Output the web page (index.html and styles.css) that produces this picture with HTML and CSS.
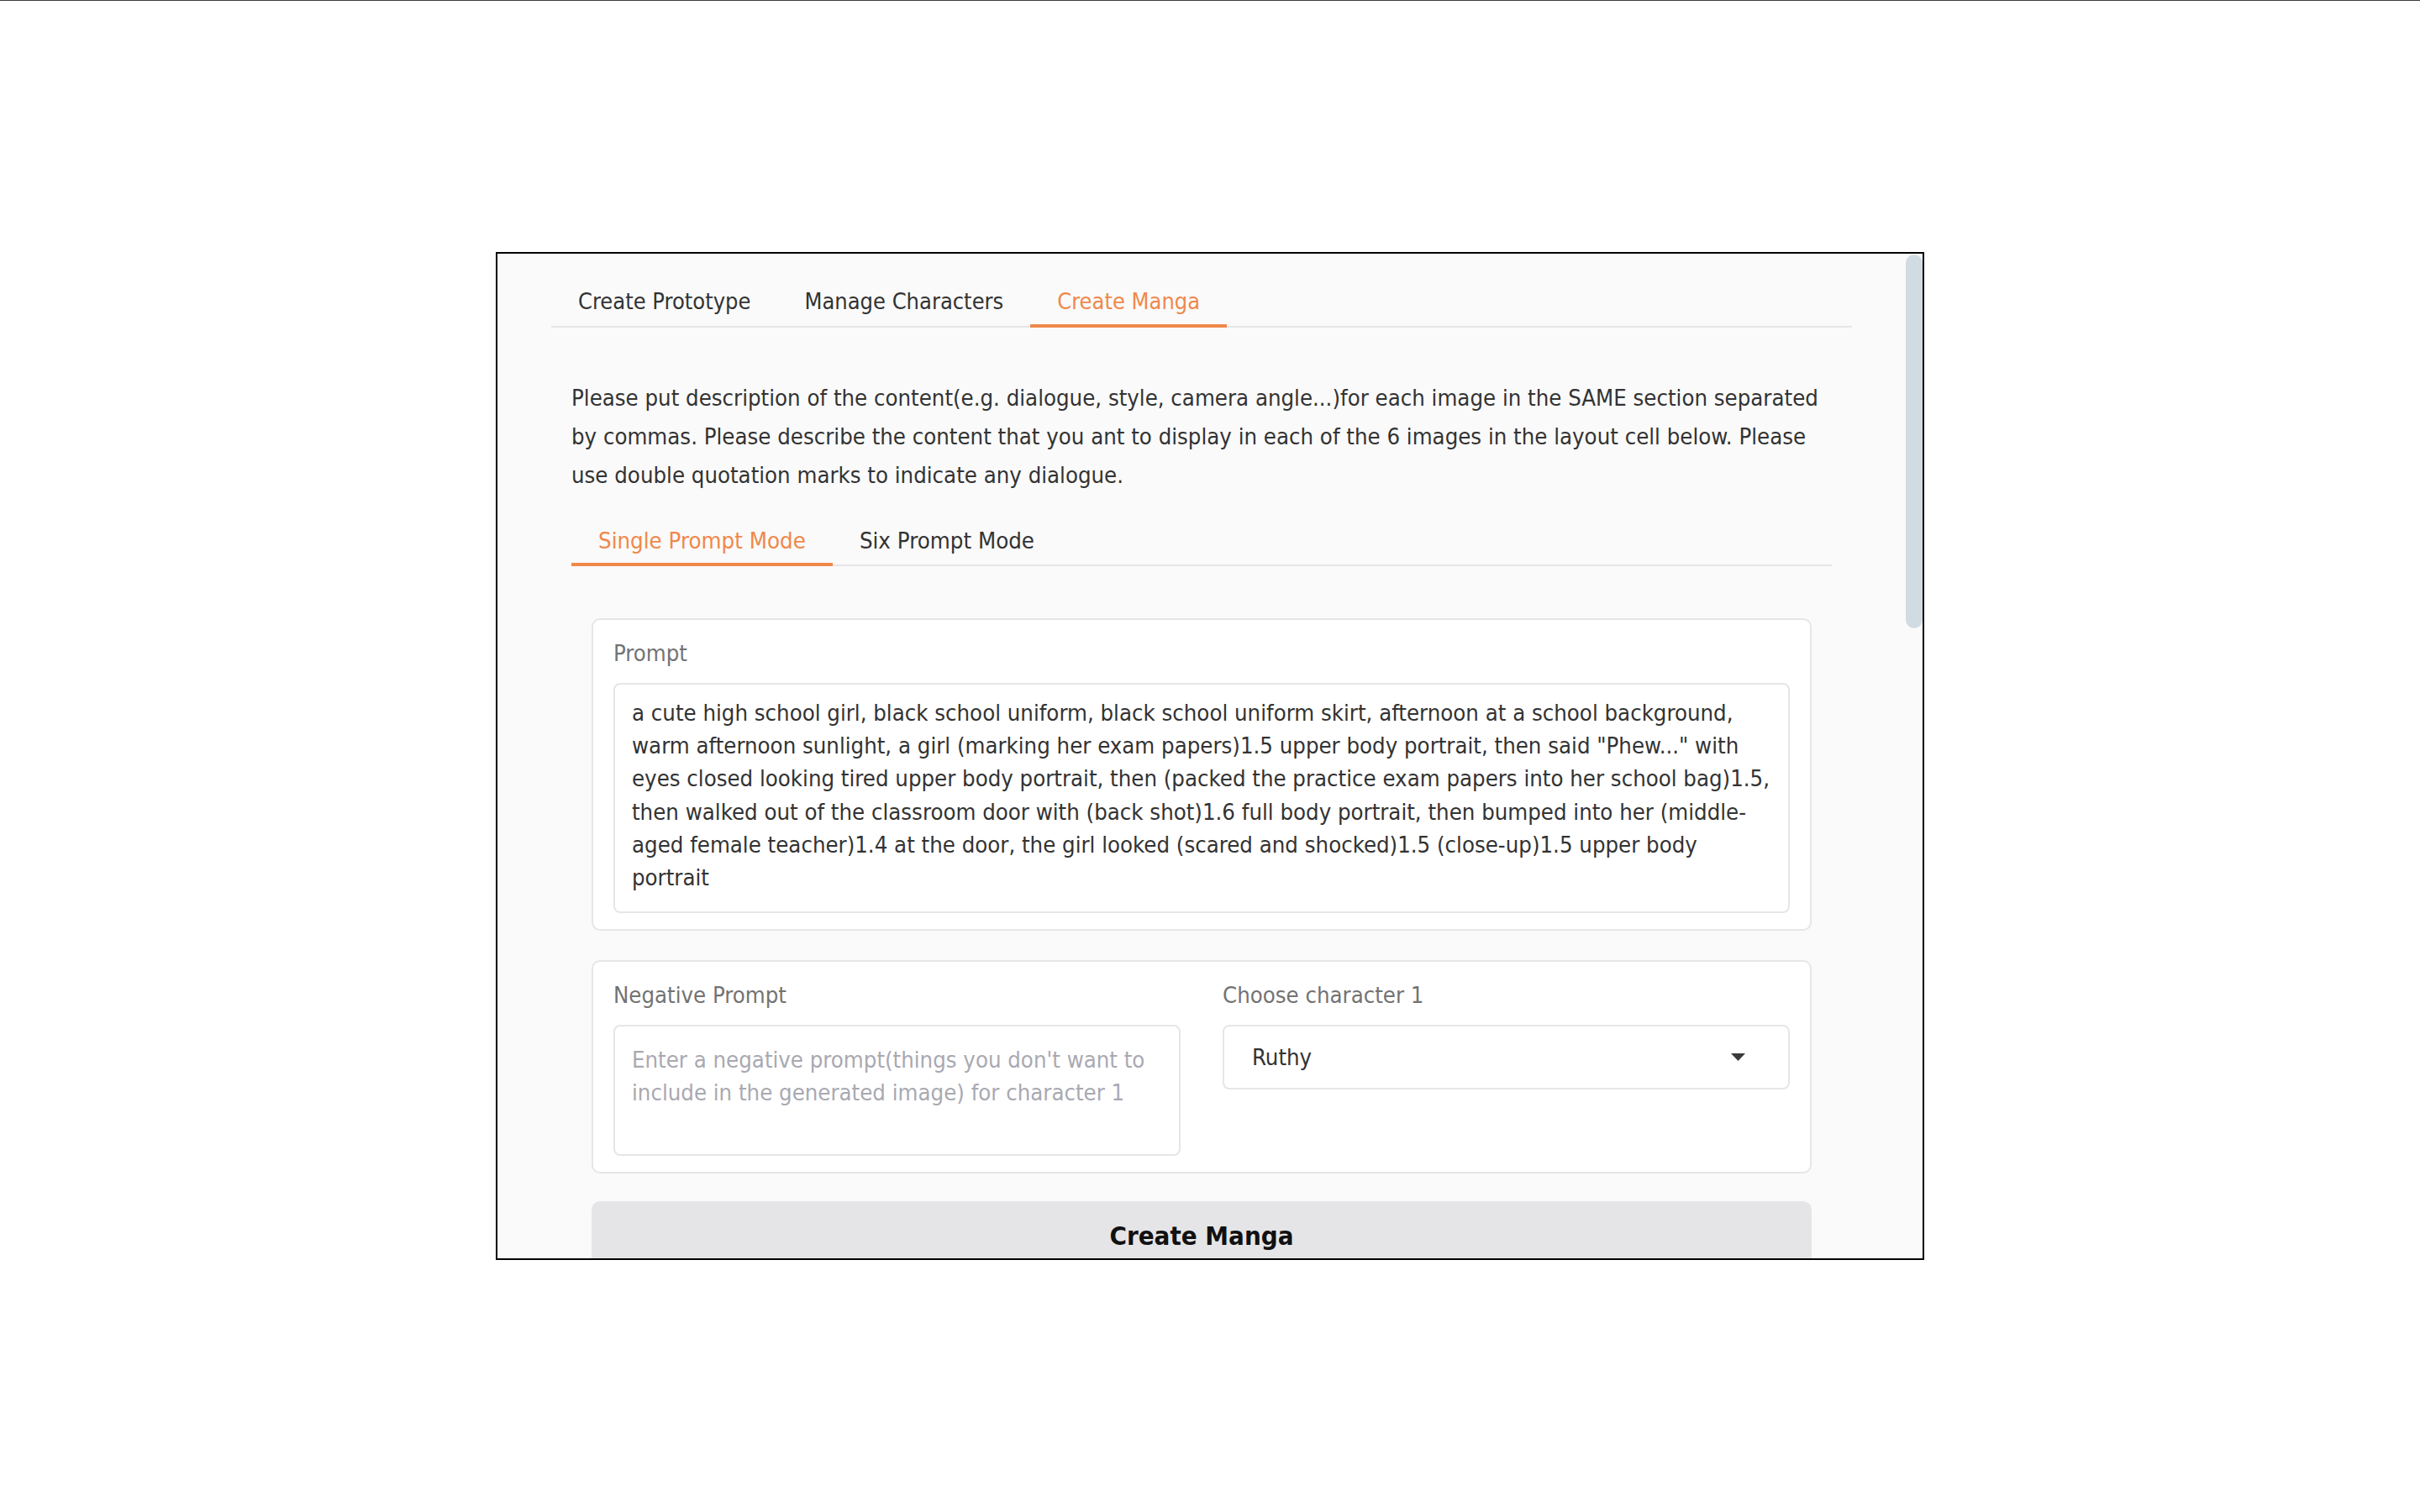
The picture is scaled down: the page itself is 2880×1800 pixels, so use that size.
FILE: index.html
```html
<!DOCTYPE html>
<html>
<head>
<meta charset="utf-8">
<title>Create Manga</title>
<link rel="stylesheet" href="styles.css">
</head>
<body>
<div class="topline"></div>
<div class="window">
  <div class="content">
    <div class="tab-nav">
      <button class="tab">Create Prototype</button>
      <button class="tab">Manage Characters</button>
      <button class="tab active">Create Manga</button>
    </div>
    <div class="tab-panel">
      <p class="desc">Please put description of the content(e.g. dialogue, style, camera angle...)for each image in the SAME section separated<br>by commas. Please describe the content that you ant to display in each of the 6 images in the layout cell below. Please<br>use double quotation marks to indicate any dialogue.</p>
      <div class="tab-nav sub-nav">
        <button class="tab sub active">Single Prompt Mode</button>
        <button class="tab sub">Six Prompt Mode</button>
      </div>
      <div class="sub-panel">
        <div class="block">
          <span class="label">Prompt</span>
          <div class="textbox prompt-text">a cute high school girl, black school uniform, black school uniform skirt, afternoon at a school background,<br>warm afternoon sunlight, a girl (marking her exam papers)1.5 upper body portrait, then said "Phew..." with<br>eyes closed looking tired upper body portrait, then (packed the practice exam papers into her school bag)1.5,<br>then walked out of the classroom door with (back shot)1.6 full body portrait, then bumped into her (middle-<br>aged female teacher)1.4 at the door, the girl looked (scared and shocked)1.5 (close-up)1.5 upper body<br>portrait</div>
        </div>
        <div class="block block-row">
          <div class="col">
            <span class="label">Negative Prompt</span>
            <div class="textbox neg-text">Enter a negative prompt(things you don't want to<br>include in the generated image) for character 1</div>
          </div>
          <div class="col">
            <span class="label">Choose character 1</span>
            <div class="dropdown">
              <span class="dd-value">Ruthy</span>
              <svg class="dd-arrow" width="17" height="9" viewBox="0 0 17 9"><path d="M0 0H17L8.5 9Z" fill="#3a3a3a"/></svg>
            </div>
          </div>
        </div>
        <button class="create-btn">Create Manga</button>
      </div>
    </div>
  </div>
  <div class="scrollbar"><div class="thumb"></div></div>
</div>
</body>
</html>
```

FILE: styles.css
```css
* { box-sizing: border-box; }
body {
  margin: 0;
  background: #ffffff;
  font-family: "DejaVu Sans Condensed", "DejaVu Sans", sans-serif;
  color: #333333;
}
.topline { height: 1px; background: #3c3c3c; }
.window {
  margin: 299px 0 0 590px;
  width: 1700px;
  height: 1200px;
  border: 2px solid #000;
  background: #fafafa;
  display: flex;
  overflow: hidden;
}
.content { flex: 1; min-width: 0; padding: 29px 64px 0; }
.scrollbar { width: 20px; flex: none; padding-top: 1px; }
.thumb { height: 445px; border-radius: 10px; background: #d1dbe2; }

.tab-nav { display: flex; border-bottom: 2px solid #e6e6e6; }
.tab {
  font-family: inherit;
  font-size: 27px;
  line-height: 55px;
  height: 59px;
  padding: 0 32px;
  background: none;
  border: 0;
  border-bottom: 4px solid transparent;
  margin-bottom: -2px;
  color: #333333;
  white-space: nowrap;
}
.tab.sub { font-size: 27.4px; line-height: 53px; height: 57px; }
.tab.active { color: #f0884a; border-bottom-color: #f0884a; }

.tab-panel { padding: 0 24px; }
.desc {
  margin: 61px 0 28px;
  font-size: 27.3px;
  line-height: 46px;
  white-space: nowrap;
}
.sub-panel { padding: 62px 24px 0; }

.block {
  background: #fff;
  border: 2px solid #e6e6e6;
  border-radius: 10px;
  padding: 22px 24px 19px;
}
.label {
  display: block;
  font-size: 27.3px;
  line-height: 36px;
  color: #737373;
  margin-bottom: 17px;
  white-space: nowrap;
}
.textbox {
  background: #fff;
  border: 2px solid #e6e6e6;
  border-radius: 8px;
  font-size: 27.3px;
  line-height: 39.2px;
  white-space: nowrap;
  overflow: hidden;
}
.prompt-text { padding: 14px 20px 21px; color: #333; }
.block-row {
  margin-top: 35px;
  display: grid;
  grid-template-columns: 1fr 1fr;
  column-gap: 50px;
}
.col { min-width: 0; }
.neg-text { height: 156px; padding: 20px 20px; color: #a9a9b1; }
.dropdown {
  height: 77px;
  background: #fff;
  border: 2px solid #e6e6e6;
  border-radius: 8px;
  display: flex;
  align-items: center;
  justify-content: space-between;
  padding: 0 51px 0 33px;
  font-size: 27.3px;
}
.dd-arrow { display: block; }
.create-btn {
  display: flex;
  align-items: center;
  justify-content: center;
  margin-top: 33px;
  width: 100%;
  height: 82px;
  background: #e5e5e7;
  border: 0;
  border-radius: 10px;
  font-family: inherit;
  font-weight: bold;
  font-size: 31px;
  color: #111;
}
```
